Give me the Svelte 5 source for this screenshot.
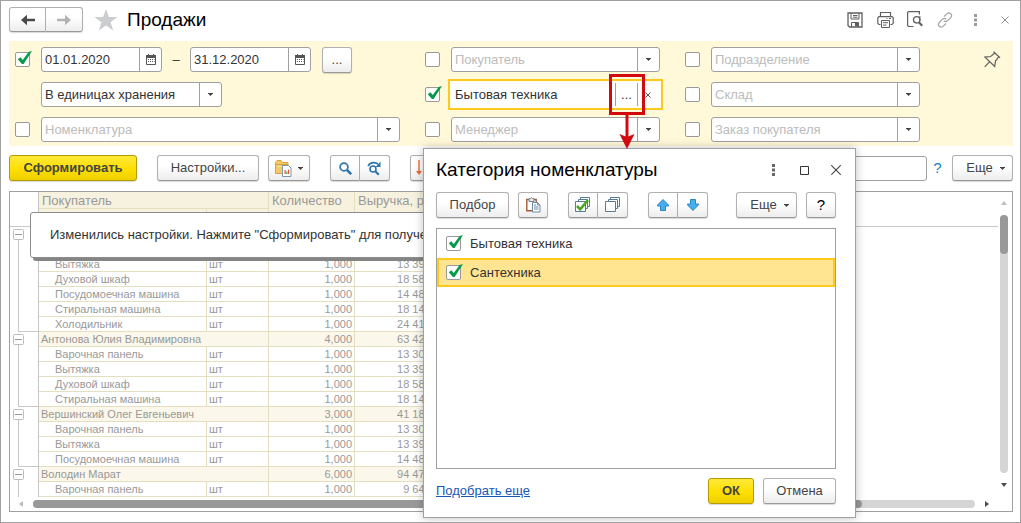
<script>
  const groups = [
    {
      name: '', qty: '', sum: '', closed: true,
      items: [
        ['', '', '', ''],
        ['Вытяжка', '13 390,00'],
        ['Духовой шкаф', '18 580,00'],
        ['Посудомоечная машина', '14 480,00'],
        ['Стиральная машина', '18 140,00'],
        ['Холодильник', '24 410,00']
      ]
    },
    {
      name: 'Антонова Юлия Владимировна', qty: '4,000', sum: '63 420,00', closed: true,
      items: [
        ['Варочная панель', '13 300,00'],
        ['Вытяжка', '13 390,00'],
        ['Духовой шкаф', '18 580,00'],
        ['Стиральная машина', '18 140,00']
      ]
    },
    {
      name: 'Вершинский Олег Евгеньевич', qty: '3,000', sum: '41 180,00', closed: true,
      items: [
        ['Варочная панель', '13 300,00'],
        ['Вытяжка', '13 390,00'],
        ['Посудомоечная машина', '14 480,00']
      ]
    },
    {
      name: 'Володин Марат', qty: '6,000', sum: '94 470,00', closed: false,
      items: [['Варочная панель', '9 640,00']]
    }
  ];

  let categories = $state([
    { name: 'Бытовая техника', on: true },
    { name: 'Сантехника', on: true }
  ]);
  let selected = $state(1);
  let use = $state({ period: true, item: false, buyer: false, category: true, manager: false, dept: false, store: false, order: false });
</script>

{#snippet tick()}
  <svg class="tick" viewBox="0 0 18 15" aria-hidden="true"><path d="M2.800 8.200 5.300 6.200 7.800 9 13.600 1 17 0 8.600 13H6.900Z" /></svg>
{/snippet}

{#snippet caret()}
  <svg class="caret" viewBox="0 0 5 3" aria-hidden="true"><path d="M0 0h5v1H4.400L2.500 3 .6 1H0Z" /></svg>
{/snippet}

{#snippet calendar()}
  <svg width="10" height="11" viewBox="0 0 10 11" aria-hidden="true">
    <path d="M.5 2v8.500h9V2" fill="none" stroke="#555" />
    <path d="M0 1h2V0h1v1h4V0h1v1h2v3H0Z" fill="#555" />
    <path d="M2 5h1v1H2zM4 5h1v1H4zM6 5h1v1H6zM2 7h1v1H2zM4 7h1v1H4zM6 7h1v1H6zM8 5h.6v1H8zM8 7h.6v1H8z" fill="#555" />
  </svg>
{/snippet}

{#snippet combo(key, label)}
  <div class="filter">
    <span class="check"><input type="checkbox" bind:checked={use[key]} aria-label="{label}: отбор" />{#if use[key]}{@render tick()}{/if}</span>
    <div class="field">
      <input type="text" placeholder={label} aria-label={label} />
      <button class="cell" aria-label="Выбрать">{@render caret()}</button>
    </div>
  </div>
{/snippet}

<div class="window">
  <header>
    <div class="group nav">
      <button class="btn" aria-label="Назад"><svg width="14" height="12" viewBox="0 0 14 12"><path d="M0 6 6 .8V4.700h8v2.600H6v3.900Z" fill="#4a4a4a" /></svg></button>
      <button class="btn" aria-label="Вперед"><svg width="14" height="12" viewBox="0 0 14 12"><path d="M14 6 8 .8V4.700H0v2.600h8v3.900Z" fill="#b3b3b3" /></svg></button>
    </div>
    <button class="plain star" aria-label="В избранное"><svg width="24" height="22" viewBox="0 0 24 22"><path d="m12 0 2.900 8H23.500l-6.900 5.200L19.200 21.500 12 16.500 4.800 21.500 7.400 13.200.5 8H9.100Z" fill="#cbcdd0" /></svg></button>
    <h1>Продажи</h1>
    <div class="tools">
      <button class="plain" aria-label="Сохранить">
        <svg width="16" height="16" viewBox="0 0 16 16" fill="none" stroke="#606060"><path d="M1 1h14v14H2.500L1 13.500Z" stroke-width="1.300" /><path d="M4 1v6h8V1M6 3.500h4.500M6 5.200h4.500M4.500 15v-4.500h7V15" /><path d="M8 11h3v3.500H8z" fill="#606060" stroke="none" /></svg>
      </button>
      <button class="plain" aria-label="Печать">
        <svg width="17" height="16" viewBox="0 0 17 16" fill="none" stroke="#606060" stroke-width="1.200"><path d="M3.500 4.500v-4h10v4M3.500 12.500H2L.8 11.300V5.800L2 4.600h13l1.200 1.200v5.500L15 12.500h-1.500" /><path d="M4.500 8.500h8v7h-8zM6 10.700h5M6 13.100h3.500M9.500 6.500h1M12 6.500h2" stroke-width="1" /></svg>
      </button>
      <button class="plain" aria-label="Просмотр">
        <svg width="16" height="17" viewBox="0 0 16 17" fill="none" stroke="#606060"><path d="M6.500 15.500H1.600L.6 14.500V1.500L1.600.6H12.400V3.500" stroke-width="1.200" /><circle cx="9.700" cy="8.800" r="3.200" stroke-width="1.300" /><path d="m11.800 11.200 3.500 3.600" stroke-width="2.200" /><path d="M12.900 5v5" /></svg>
      </button>
      <button class="plain" aria-label="Ссылка">
        <svg width="16" height="16" viewBox="0 0 16 16" fill="none" stroke="#a5a5a5" stroke-width="1.200"><path d="M7 4.500 10 1.600q1.900-1.600 3.700.1t.1 3.700L10.500 8.800q-1.900 1.600-3.700 0" /><path d="M9 11.500 6 14.400q-1.900 1.600-3.700-.1t-.1-3.700L5.500 7.200q1.900-1.600 3.700 0" /></svg>
      </button>
      <button class="plain" aria-label="Меню"><svg width="3" height="12" viewBox="0 0 3 12" fill="#9a9a9a"><path d="M0 0h3v3H0zM0 4.500h3v3H0zM0 9h3v3H0z" /></svg></button>
      <button class="plain" aria-label="Закрыть"><svg width="8" height="8" viewBox="0 0 8 8"><path d="m.5.5 7 7m0-7-7 7" stroke="#8c8c8c" /></svg></button>
    </div>
  </header>

  <section class="filters">
    <div class="column">
      <div class="filter">
        <span class="check"><input type="checkbox" bind:checked={use.period} aria-label="Период" />{#if use.period}{@render tick()}{/if}</span>
        <div class="dates">
          <div class="field date"><input type="text" value="01.01.2020" aria-label="Начало периода" /><button class="cell" aria-label="Календарь">{@render calendar()}</button></div>
          <span class="dash">–</span>
          <div class="field date"><input type="text" value="31.12.2020" aria-label="Конец периода" /><button class="cell" aria-label="Календарь">{@render calendar()}</button></div>
          <button class="btn icon more">...</button>
        </div>
      </div>
      <div class="filter">
        <span class="check"></span>
        <div class="field units">
          <select aria-label="Единицы измерения"><option>В единицах хранения</option></select>
          <span class="cell">{@render caret()}</span>
        </div>
      </div>
      {@render combo('item', 'Номенклатура')}
    </div>
    <div class="column">
      {@render combo('buyer', 'Покупатель')}
      <div class="filter">
        <span class="check"><input type="checkbox" bind:checked={use.category} aria-label="Категория: отбор" />{#if use.category}{@render tick()}{/if}</span>
        <div class="field active">
          <input type="text" value="Бытовая техника" aria-label="Категория номенклатуры" />
          <button class="cell dots">...
            <svg class="callout" width="36" height="76" viewBox="0 0 36 76" aria-hidden="true"><path d="M1.500 1.500h33v38h-33z" fill="none" stroke="#d00a0f" stroke-width="3" /><path d="M18 40v24" stroke="#d00a0f" stroke-width="3" /><path d="m18 75-7.500-15L18 63l7.500-3Z" fill="#d00a0f" /></svg>
          </button>
          <button class="cell" aria-label="Очистить"><svg width="6" height="6" viewBox="0 0 6 6"><path d="m.5.5 5 5m0-5-5 5" stroke="#555" /></svg></button>
        </div>
      </div>
      {@render combo('manager', 'Менеджер')}
    </div>
    <div class="column">
      {@render combo('dept', 'Подразделение')}
      {@render combo('store', 'Склад')}
      {@render combo('order', 'Заказ покупателя')}
    </div>
    <button class="plain pin" aria-label="Закрепить">
      <svg width="17" height="17" viewBox="0 0 17 17" fill="none" stroke="#606060" stroke-width="1.200"><path d="m9.500.8 6.500 6M10.800 2 6.700 5.500 1 6.100l9.700 9.300.8-5.300 3.400-4.400M5.500 10.800.7 15.900" /></svg>
    </button>
  </section>

  <div class="toolbar">
    <button class="btn primary run">Сформировать</button>
    <button class="btn settings">Настройки...</button>
    <button class="btn variants" aria-label="Варианты отчета">
      <svg width="17" height="17" viewBox="0 0 17 17"><path d="M.5 2.500 2 .5h4l1.500 2H13v11H.5Z" fill="#f2cb68" stroke="#d9a23c" /><path d="M1 4.500h12" stroke="#d9a23c" /><path d="M3 6.500h9" stroke="#fae3a0" /><path d="M7.500 5.500h6l2.500 2.500v8.500H7.500Z" fill="#fff" stroke="#7d95a8" /><path d="M9.500 10h1.200v4H9.500z" fill="#e0533d" /><path d="M11.200 11.500h1.200V14h-1.200z" fill="#4ca64c" /><path d="M12.900 9.500h1.200V14h-1.200z" fill="#e0533d" /></svg>
      {@render caret()}
    </button>
    <div class="group find">
      <button class="btn icon" aria-label="Найти"><svg width="13" height="13" viewBox="0 0 13 13" fill="none" stroke="#2d76a8"><circle cx="5" cy="5" r="3.900" stroke-width="1.700" /><path d="m8 8 4.200 4.200" stroke-width="2.500" /></svg></button>
      <button class="btn icon" aria-label="Найти далее"><svg width="15" height="15" viewBox="0 0 15 15" fill="none" stroke="#2d76a8"><circle cx="6" cy="8" r="3" stroke-width="1.600" /><path d="m8.300 10.300 3.500 3.500" stroke-width="2.200" /><path d="M1 5Q4.500-.5 11 3" stroke-width="1.600" /><path d="M13.500.5V6H8.600Z" fill="#2d76a8" stroke="none" /></svg></button>
    </div>
    <div class="group">
      <button class="btn icon sort" aria-label="По возрастанию"><svg width="16" height="16" viewBox="0 0 16 16"><path d="M3 0v12" stroke="#ea6a3a" stroke-width="1.400" /><path d="M0 11h6l-3 4Z" fill="#ea6a3a" /></svg></button>
      <button class="btn icon" aria-label="По убыванию"><svg width="16" height="16" viewBox="0 0 16 16"><path d="M3 15V4" stroke="#ea6a3a" stroke-width="1.400" /><path d="M0 4h6L3 0Z" fill="#ea6a3a" /></svg></button>
    </div>
    <div class="field result"><input type="text" aria-label="Результат" /></div>
    <button class="plain help">?</button>
    <button class="btn menu">Еще {@render caret()}</button>
  </div>

  <main class="report">
    <div class="sheet">
      <table>
        <colgroup><col class="c-tree" /><col class="c-name" /><col class="c-unit" /><col class="c-qty" /><col class="c-sum" /><col /></colgroup>
        <thead>
          <tr><td class="tree" rowspan="2"></td><th colspan="2">Покупатель</th><th rowspan="2">Количество</th><th rowspan="2">Выручка, руб.</th><td class="rest" rowspan="2"></td></tr>
          <tr class="sub"><th></th><th></th></tr>
        </thead>
        <tbody>
          {#each groups as g}
            <tr class="total">
              <td class="tree"><svg width="28" height="15" viewBox="0 0 28 15"><path d="M8.500 13v2" stroke="#c6c6c6" /><rect x="3.500" y="2.500" width="10" height="10" rx="1" fill="#fff" stroke="#bdbdbd" /><path d="M5 7.500h7" stroke="#999" /></svg></td>
              <td colspan="2">{g.name}</td><td class="num">{g.qty}</td><td class="num">{g.sum}</td><td class="rest"></td>
            </tr>
            {#each g.items as [name, sum, unit = 'шт', qty = '1,000'], i}
              <tr>
                <td class="tree"><svg width="28" height="15" viewBox="0 0 28 15"><path d={g.closed && i === g.items.length - 1 ? 'M8.500 0v14.500H28' : 'M8.500 0v15'} fill="none" stroke="#c6c6c6" /></svg></td>
                <td class="item">{name}</td><td>{unit}</td><td class="num">{qty}</td><td class="num">{sum}</td><td class="rest"></td>
              </tr>
            {/each}
          {/each}
        </tbody>
      </table>
      <div class="notice" role="status">Изменились настройки. Нажмите "Сформировать" для получения отчета.</div>
    </div>
    <div class="vbar">
      <svg width="6" height="4" viewBox="0 0 6 4"><path d="M0 4h6L3 0Z" fill="#bdbdbd" /></svg>
      <div class="track"><div class="thumb"></div></div>
      <svg width="6" height="4" viewBox="0 0 6 4"><path d="M0 0h6L3 4Z" fill="#4d4d4d" /></svg>
    </div>
    <div class="hbar">
      <svg width="4" height="6" viewBox="0 0 4 6"><path d="M4 0v6L0 3Z" fill="#bdbdbd" /></svg>
      <div class="track"><div class="thumb"></div></div>
      <svg width="4" height="6" viewBox="0 0 4 6"><path d="M0 0v6l4-3Z" fill="#4d4d4d" /></svg>
    </div>
  </main>

  <div class="dialog" role="dialog" aria-labelledby="dialog-title">
    <div class="caption">
      <h2 id="dialog-title">Категория номенклатуры</h2>
      <button class="plain" aria-label="Меню"><svg width="3" height="12" viewBox="0 0 3 12" fill="#666"><path d="M0 0h3v3H0zM0 4.500h3v3H0zM0 9h3v3H0z" /></svg></button>
      <button class="plain" aria-label="Развернуть"><svg width="9" height="9" viewBox="0 0 9 9"><path d="M.5.5h8v8h-8z" fill="none" stroke="#333" /></svg></button>
      <button class="plain" aria-label="Закрыть"><svg width="10" height="10" viewBox="0 0 10 10"><path d="m.3.3 9.400 9.400m0-9.400L.3 9.700" stroke="#444" stroke-width="1.100" /></svg></button>
    </div>
    <div class="bar">
      <button class="btn pick">Подбор</button>
      <button class="btn icon" aria-label="Вставить"><svg width="15" height="16" viewBox="0 0 15 16"><path d="M.8 2.500h9.400v11.200H.8Z" fill="#fff" stroke="#a65a35" stroke-width="1.400" /><path d="M3 1.500h1.500Q5.500-.5 6.500 1.500H8v3H3Z" fill="#dfe5ea" stroke="#71899c" /><path d="M6.500 5.500h5l2.500 2.500v7H6.500Z" fill="#fff" stroke="#6d8aa2" /><path d="M11.500 5.500V8H14M8 8h2M8 10h4.500M8 12h4.500" fill="none" stroke="#6d8aa2" /></svg></button>
      <div class="group marks">
        <button class="btn icon" aria-label="Установить флажки"><svg width="16" height="16" viewBox="0 0 16 16"><g fill="#fff" stroke="#5b7c97"><path d="M5.500.5h9v9h-9z" /><path d="M3.500 2.500h9v9h-9z" /><path d="M.5 4.500h10v10H.5z" /></g><path d="m2 9 3.200 3.300L13 3.200" fill="none" stroke="#48a823" stroke-width="2.600" /></svg></button>
        <button class="btn icon" aria-label="Снять флажки"><svg width="16" height="16" viewBox="0 0 16 16"><g fill="#fff" stroke="#5b7c97"><path d="M5.500.5h9v9h-9z" /><path d="M3.500 2.500h9v9h-9z" /><path d="M.5 4.500h10v10H.5z" /></g></svg></button>
      </div>
      <div class="group moves">
        <button class="btn icon" aria-label="Вверх"><svg width="12" height="12" viewBox="0 0 12 12"><path d="M6 .6 11.500 6v1H8.500v4.500h-5V7H.5V6Z" fill="#45adf0" stroke="#2b86c2" /></svg></button>
        <button class="btn icon" aria-label="Вниз"><svg width="12" height="12" viewBox="0 0 12 12"><path d="M6 11.400 11.500 6V5H8.500V.5h-5V5H.5v1Z" fill="#45adf0" stroke="#2b86c2" /></svg></button>
      </div>
      <button class="btn menu push">Еще {@render caret()}</button>
      <button class="btn icon ask">?</button>
    </div>
    <div class="list">
      {#each categories as c, i}
        <label class="option" class:selected={selected === i}>
          <span class="check"><input type="checkbox" bind:checked={c.on} onfocus={() => (selected = i)} />{#if c.on}{@render tick()}{/if}</span>
          {c.name}
        </label>
      {/each}
    </div>
    <div class="footer">
      <a href="#more">Подобрать еще</a>
      <button class="btn primary ok">ОК</button>
      <button class="btn cancel">Отмена</button>
    </div>
  </div>
</div>

<style>
  :global(body) {
    margin: 0;
    background: #fff;
  }
  .window, .window * {
    box-sizing: border-box;
  }
  .window {
    position: relative;
    display: flex;
    flex-direction: column;
    min-height: 100vh;
    padding: 0 7px 10px 8px;
    border: 1px solid #a0a0a0;
    background: #fff;
    color: #333;
    font: 13px/16px "Liberation Sans", Arial, sans-serif;
    overflow: hidden;
  }
  button, input, select {
    margin: 0;
    padding: 0;
    border: 0;
    font: inherit;
    color: inherit;
    background: none;
  }
  svg {
    display: block;
    flex: none;
  }
  h1, h2 {
    margin: 0;
    color: #000;
    font-size: 19px;
    line-height: 24px;
    font-weight: 400;
  }

  .btn {
    display: flex;
    flex: none;
    align-items: center;
    justify-content: center;
    height: 26px;
    border: 1px solid #b0b0b0;
    border-bottom-color: #989898;
    border-radius: 3px;
    background: linear-gradient(#fff 40%, #ededed);
    box-shadow: 0 1px 1px #00000026;
    color: #444;
    white-space: nowrap;
  }
  .btn.icon {
    width: 30px;
  }
  .btn.primary {
    border-color: #b39b00;
    background: linear-gradient(#ffe93b, #fddf00 55%, #efd000);
    color: #444;
    font-weight: 700;
  }
  .group {
    display: flex;
  }
  .group .btn:first-child {
    border-radius: 3px 0 0 3px;
  }
  .group .btn + .btn {
    border-left: 0;
    border-radius: 0 3px 3px 0;
  }
  .plain {
    display: flex;
    align-items: center;
    justify-content: center;
  }
  .caret {
    width: 5px;
    height: 3px;
    fill: #444;
  }

  header {
    display: flex;
    align-items: center;
    height: 40px;
    margin-right: -7px;
    padding-bottom: 3px;
  }
  .nav .btn {
    width: 37px;
    height: 25px;
  }
  .star {
    margin: 0 9px 0 11px;
  }
  .tools {
    display: flex;
    margin-left: auto;
  }
  .tools .plain {
    width: 30px;
    height: 24px;
  }

  .filters {
    display: grid;
    grid-template-columns: 385fr 235fr 235fr 62fr;
    gap: 25px;
    padding: 6px 6px 4px;
    background: #fff9d9;
  }
  .column {
    display: flex;
    flex-direction: column;
    gap: 10px;
    min-width: 0;
  }
  .filter {
    display: flex;
    align-items: center;
    gap: 11px;
    height: 25px;
  }
  .check {
    position: relative;
    flex: none;
    width: 15px;
    height: 15px;
  }
  .check input {
    display: block;
    width: 15px;
    height: 15px;
    appearance: none;
    border: 1px solid #999;
    border-radius: 2px;
    background: #fff;
  }
  .tick {
    position: absolute;
    top: -1px;
    left: 0;
    width: 18px;
    height: 15px;
    fill: #079a4b;
    pointer-events: none;
  }
  .field {
    display: flex;
    flex: 1;
    min-width: 0;
    height: 25px;
    border: 1px solid #a0a0a0;
    border-radius: 3px;
    background: #fff;
  }
  .field input, .field select {
    flex: 1;
    width: 0;
    min-width: 0;
    padding: 0 3px;
    outline: none;
    appearance: none;
  }
  .field input::placeholder {
    color: #bcbcbc;
    opacity: 1;
  }
  .cell {
    display: flex;
    flex: none;
    align-items: center;
    justify-content: center;
    width: 22px;
    border-left: 1px solid #a0a0a0;
  }
  span.cell {
    pointer-events: none;
  }
  .dates {
    display: flex;
    align-items: center;
  }
  .date {
    flex: none;
    width: 121px;
  }
  .dash {
    width: 28px;
    text-align: center;
  }
  .more {
    margin-left: 11px;
  }
  .units {
    flex: none;
    width: 181px;
  }
  .active {
    border-color: #fff;
    border-radius: 0;
    box-shadow: 0 0 0 1px #fffdf0, 0 0 0 3px #fcca1f;
  }
  .active .cell:last-child {
    justify-content: flex-start;
    padding-left: 7px;
  }
  .dots {
    position: relative;
  }
  .callout {
    position: absolute;
    top: -9px;
    left: -7px;
    z-index: 3;
  }
  .pin {
    align-self: start;
    justify-self: end;
    margin: 4px 6px 0 0;
  }

  .toolbar {
    display: flex;
    align-items: center;
    margin: 9px 0 10px;
  }
  .run {
    width: 128px;
    margin-right: 20px;
  }
  .settings {
    width: 102px;
    margin-right: 9px;
  }
  .variants {
    gap: 6px;
    width: 42px;
  }
  .find {
    margin: 0 20px;
  }
  .sort {
    justify-content: flex-start;
    padding-left: 5px;
  }
  .result {
    margin-left: 20px;
  }
  .help {
    width: 25px;
    padding-right: 4px;
    color: #1c7fc4;
    font-size: 15px;
  }
  .menu {
    gap: 7px;
    width: 61px;
    padding-left: 6px;
  }

  .report {
    display: grid;
    flex: 1;
    grid-template: 1fr 14px / minmax(0, 1fr) 14px;
    border: 1px solid #a0a0a0;
  }
  .sheet {
    position: relative;
    overflow: hidden;
  }
  table {
    width: 100%;
    table-layout: fixed;
    border-spacing: 0;
    color: #999;
    font-size: 11px;
    line-height: 14px;
  }
  .c-tree { width: 29px; }
  .c-name { width: 168px; }
  .c-unit { width: 62px; }
  .c-qty { width: 86px; }
  .c-sum { width: 94px; }
  td, th {
    height: 15px;
    padding: 0 2px;
    border: solid #e4dfc0;
    border-width: 0 1px 1px 0;
    text-align: left;
    white-space: nowrap;
    overflow: hidden;
  }
  th {
    height: 17px;
    padding: 1px 3px 0;
    background: #f7f2e0;
    font-size: 13px;
    line-height: 15px;
    font-weight: 400;
    vertical-align: top;
  }
  .sub th {
    height: 18px;
  }
  thead .tree, thead .rest {
    border-bottom-color: #c8c8c8;
  }
  .tree {
    padding: 0;
    border-right-color: #c6c6c6;
  }
  tbody .tree {
    border-bottom: 0;
  }
  .rest {
    border-right: 0;
  }
  tbody .rest {
    border: 0;
  }
  .total td:not(.tree, .rest) {
    background: #fbf7ea;
  }
  .item {
    padding-left: 16px;
  }
  .num {
    text-align: right;
  }
  .notice {
    position: absolute;
    top: 20px;
    left: 20px;
    width: 500px;
    padding: 14px 19px;
    border: 1px solid #8c8c8c;
    border-radius: 3px;
    background: #fff;
    box-shadow: 3px 3px 0 #858585;
    white-space: nowrap;
  }
  .vbar, .hbar {
    display: flex;
    align-items: center;
    gap: 10px;
  }
  .vbar {
    flex-direction: column;
    padding: 9px 3px 10px 0;
  }
  .hbar {
    padding: 0 9px;
  }
  .track {
    flex: 1;
    border-radius: 4px;
    background: #d5d5d5;
  }
  .thumb {
    border-radius: 4px;
    background: #999;
  }
  .vbar .track {
    width: 8px;
  }
  .vbar .thumb {
    height: 39px;
  }
  .hbar .track {
    height: 8px;
  }
  .hbar .thumb {
    width: 88%;
    height: 8px;
  }

  .dialog {
    position: absolute;
    top: 147px;
    left: 422px;
    z-index: 2;
    width: 433px;
    padding: 7px 19px 13px 12px;
    border: 1px solid #a0a0a0;
    background: #fff;
    box-shadow: 0 0 9px #00000040;
  }
  .caption {
    display: flex;
    align-items: center;
    height: 28px;
    margin: 0 -15px 8px 0;
  }
  .caption h2 {
    flex: 1;
  }
  .caption .plain {
    width: 31px;
    height: 24px;
  }
  .bar {
    display: flex;
    align-items: center;
    margin-bottom: 10px;
  }
  .pick {
    width: 73px;
    margin-right: 9px;
  }
  .marks, .moves {
    margin-left: 20px;
  }
  .push {
    margin: 0 9px 0 auto;
  }
  .ask {
    color: #000;
    font-size: 15px;
  }
  .list {
    min-height: 241px;
    border: 1px solid #a0a0a0;
  }
  .option {
    display: flex;
    align-items: center;
    gap: 9px;
    height: 29px;
    padding-left: 7px;
    border: 2px solid transparent;
  }
  .selected {
    border-color: #fcca1f;
    background: #ffe591;
  }
  .footer {
    display: flex;
    align-items: center;
    gap: 9px;
    margin-top: 9px;
  }
  a {
    margin-right: auto;
    color: #1a56b8;
    text-decoration: underline;
  }
  .ok {
    width: 46px;
  }
  .cancel {
    width: 73px;
  }
</style>
